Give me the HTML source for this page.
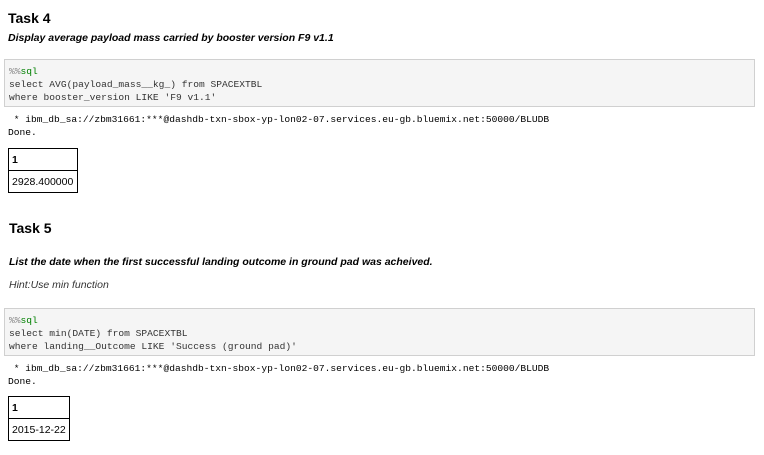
<!DOCTYPE html>
<html><head><style>
body{margin:0;width:764px;height:455px;background:#fff;position:relative;font-family:"Liberation Sans",sans-serif;color:#000;overflow:hidden}
.a{position:absolute;white-space:nowrap}
.it{font-style:italic;font-weight:bold;font-size:10.5px}
.code{position:absolute;left:4px;width:751px;height:48px;background:#f5f5f5;border:1px solid #d0d0d0;box-sizing:border-box}
.m{font-family:"Liberation Mono",monospace;font-size:9.6px;line-height:13px;color:#333}
.g{color:#008000;}
table{position:absolute;border-collapse:collapse;font-size:10.5px}
td{border:1px solid #000;height:22px;padding:0 3px;box-sizing:border-box;white-space:nowrap}
</style></head><body>
<div class="a" style="left:8px;top:10px;font-weight:bold;font-size:14px">Task 4</div>
<div class="a it" style="left:8px;top:32px">Display average payload mass carried by booster version F9 v1.1</div>
<div class="code" style="top:59px"></div>
<div class="a m" style="left:9px;top:65px"><span style="color:#888">%%</span><span class="g">sql</span><br>select AVG(payload_mass__kg_) from SPACEXTBL<br>where booster_version LIKE 'F9 v1.1'</div>
<div class="a m" style="left:8px;top:113px;color:#000">&nbsp;* ibm_db_sa://zbm31661:***@dashdb-txn-sbox-yp-lon02-07.services.eu-gb.bluemix.net:50000/BLUDB<br>Done.</div>
<table style="left:8px;top:148px;width:70px"><tr><td style="font-weight:bold">1</td></tr><tr><td>2928.400000</td></tr></table>

<div class="a" style="left:9px;top:220px;font-weight:bold;font-size:14px">Task 5</div>
<div class="a it" style="left:9px;top:256px">List the date when the first successful landing outcome in ground pad was acheived.</div>
<div class="a" style="left:9px;top:279px;font-style:italic;font-size:10.5px;color:#333">Hint:Use min function</div>
<div class="code" style="top:308px"></div>
<div class="a m" style="left:9px;top:314px"><span style="color:#888">%%</span><span class="g">sql</span><br>select min(DATE) from SPACEXTBL<br>where landing__Outcome LIKE 'Success (ground pad)'</div>
<div class="a m" style="left:8px;top:362px;color:#000">&nbsp;* ibm_db_sa://zbm31661:***@dashdb-txn-sbox-yp-lon02-07.services.eu-gb.bluemix.net:50000/BLUDB<br>Done.</div>
<table style="left:8px;top:396px;width:62px"><tr><td style="font-weight:bold">1</td></tr><tr><td>2015-12-22</td></tr></table>
</body></html>
